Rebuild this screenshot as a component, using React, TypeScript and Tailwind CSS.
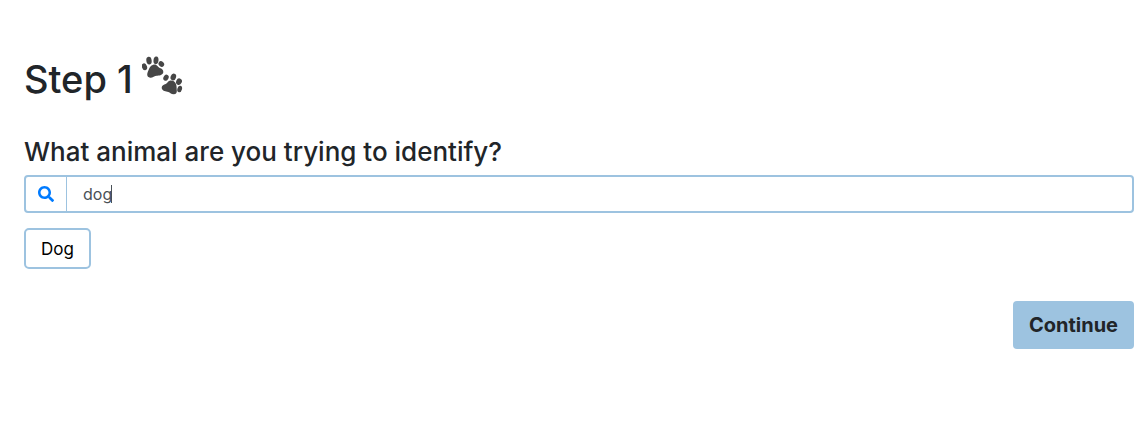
import { useState } from "react";
import { FaSearch } from "react-icons/fa";

const ANIMALS = ["Dog"];

function PawPrints() {
  return (
    <svg viewBox="18 18 123 117" className="h-[39px] w-[41px] shrink-0 fill-[#464646]" aria-hidden="true">
      <ellipse cx="25.500" cy="50.500" rx="7.500" ry="10.500" transform="rotate(-20 25.500 50.500)" />
      <ellipse cx="39" cy="32" rx="8" ry="11.500" transform="rotate(-8 39 32)" />
      <ellipse cx="60" cy="31" rx="7.500" ry="11.500" transform="rotate(6 60 31)" />
      <ellipse cx="76" cy="42" rx="7.500" ry="9" transform="rotate(-50 76 42)" />
      <path d="M52 44C61 42 65 50 71 54C78 56 82 60 82 66C81 74 73 77 64 77C56 76 50 84 42 83C34 82 32 75 35 67C38 59 42 46 52 44Z" />
      <ellipse cx="90" cy="83" rx="7.500" ry="9.500" transform="rotate(30 90 83)" />
      <ellipse cx="112" cy="81" rx="8" ry="10.500" transform="rotate(20 112 81)" />
      <ellipse cx="129" cy="95" rx="8.500" ry="10" transform="rotate(25 129 95)" />
      <ellipse cx="131" cy="117" rx="7" ry="10" transform="rotate(15 131 117)" />
      <path d="M101 92C108 90 114 93 118 98C122 104 122 111 122 118C124 127 121 133 113 133C105 133 102 126 94 125C86 124 78 121 77 113C77 106 84 104 89 102C94 99 96 93 101 92Z" />
    </svg>
  );
}

export default function App() {
  const [query, setQuery] = useState("dog");
  const matches = ANIMALS.filter((name) => name.toLowerCase().includes(query.toLowerCase()));

  return (
    <main className="bg-white pt-14 pr-[13px] pb-8 pl-6 font-['Inter',sans-serif] text-[#212529]">
      <h1 className="flex gap-[9px] text-[38px] leading-[46px] font-medium">
        Step 1
        <PawPrints />
      </h1>
      <form onSubmit={(event) => event.preventDefault()}>
        <label htmlFor="animal" className="mt-[34px] block text-[26px] leading-8 font-medium">
          What animal are you trying to identify?
        </label>
        <div className="mt-[7px] flex h-[38px] rounded border-2 border-[#9dc3e0] text-[#495057]">
          <span className="flex w-[41px] shrink-0 items-center justify-center border-r border-[#9dc3e0]">
            <FaSearch className="size-4 text-[#007bff]" aria-hidden="true" />
          </span>
          <div className="relative flex-1">
            <input
              id="animal"
              type="text"
              value={query}
              onChange={(event) => setQuery(event.target.value)}
              className="h-full w-full bg-transparent px-4 text-base caret-transparent outline-none"
            />
            <span className="absolute top-2 left-11 h-[18px] w-px bg-[#495057]" aria-hidden="true" />
          </div>
        </div>
        <div className="mt-[15px] flex min-h-[41px] gap-2">
          {matches.map((name) => (
            <button
              key={name}
              type="button"
              onClick={() => setQuery(name)}
              className="rounded-[5px] border-2 border-[#9dc3e0] px-[15px] pt-1.5 pb-1 text-[17px] text-black"
            >
              {name}
            </button>
          ))}
        </div>
        <div className="mt-8 flex justify-end">
          <button type="submit" className="rounded bg-[#9dc3e0] px-4 py-2 text-xl leading-8 font-bold">
            Continue
          </button>
        </div>
      </form>
    </main>
  );
}
